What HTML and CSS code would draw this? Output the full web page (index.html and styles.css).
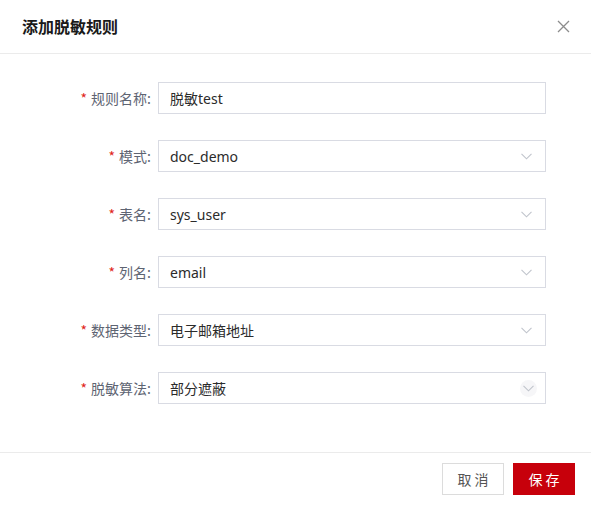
FILE: index.html
```html
<!DOCTYPE html>
<html lang="zh">
<head>
<meta charset="utf-8">
<link rel="stylesheet" href="styles.css">
</head>
<body>
<div class="dialog">
  <div class="header">
    <div class="title">添加脱敏规则</div>
    <svg class="close" width="13" height="13" viewBox="0 0 13 13"><path d="M1 1L12 12M12 1L1 12" stroke="#8c8c8c" stroke-width="1.3" fill="none"/></svg>
  </div>
  <div class="form">
    <label class="label"><span class="req">*</span>规则名称:</label>
    <div class="input">脱敏test</div>

    <label class="label"><span class="req">*</span>模式:</label>
    <div class="input select">doc_demo<svg class="chev" width="11" height="7" viewBox="0 0 11 7"><path d="M0.5 0.8L5.5 5.8L10.5 0.8" stroke="#c0c4cc" stroke-width="1.1" fill="none"/></svg></div>

    <label class="label"><span class="req">*</span>表名:</label>
    <div class="input select">sys_user<svg class="chev" width="11" height="7" viewBox="0 0 11 7"><path d="M0.5 0.8L5.5 5.8L10.5 0.8" stroke="#c0c4cc" stroke-width="1.1" fill="none"/></svg></div>

    <label class="label"><span class="req">*</span>列名:</label>
    <div class="input select">email<svg class="chev" width="11" height="7" viewBox="0 0 11 7"><path d="M0.5 0.8L5.5 5.8L10.5 0.8" stroke="#c0c4cc" stroke-width="1.1" fill="none"/></svg></div>

    <label class="label"><span class="req">*</span>数据类型:</label>
    <div class="input select">电子邮箱地址<svg class="chev" width="11" height="7" viewBox="0 0 11 7"><path d="M0.5 0.8L5.5 5.8L10.5 0.8" stroke="#c0c4cc" stroke-width="1.1" fill="none"/></svg></div>

    <label class="label"><span class="req">*</span>脱敏算法:</label>
    <div class="input select">部分遮蔽<span class="chev-bg"><svg class="chev" width="11" height="7" viewBox="0 0 11 7"><path d="M0.5 0.8L5.5 5.8L10.5 0.8" stroke="#c0c4cc" stroke-width="1.1" fill="none"/></svg></span></div>
  </div>
  <div class="footer">
    <button class="btn cancel">取 消</button>
    <button class="btn save">保 存</button>
  </div>
</div>
</body>
</html>
```
FILE: styles.css
```css
* { box-sizing: border-box; }
html, body { margin: 0; padding: 0; background: #fff; }
body {
  font-family: "Noto Sans", "Noto Sans CJK SC", sans-serif;
  font-size: 14px;
  color: #333;
}
.dialog { width: 591px; height: 505px; background: #fff; }
.header {
  height: 54px;
  border-bottom: 1px solid #ebebeb;
  display: flex;
  align-items: center;
  justify-content: space-between;
  padding: 0 21px 2px 22px;
}
.title {
  font-family: "Noto Sans CJK SC", sans-serif;
  font-size: 16px;
  font-weight: 700;
  color: #1a1a1a;
}
.close { display: block; margin-top: 2px; }
.form {
  display: grid;
  grid-template-columns: 151px 388px;
  column-gap: 7px;
  row-gap: 26px;
  padding: 28px 0 0 0;
  height: 398px;
  align-content: start;
}
.label {
  font-family: "Noto Sans CJK SC", sans-serif;
  text-align: right;
  color: #5e6472;
  font-size: 14px;
  line-height: 32px;
  height: 32px;
}
.req { color: #e0251b; margin-right: 4px; }
.input {
  height: 32px;
  border: 1px solid #d9dbe3;
  padding: 0 11px;
  display: flex;
  align-items: center;
  justify-content: space-between;
  font-size: 14px;
  color: #2b2b2b;
}
.chev { display: block; margin-right: 2px; }
.chev-bg {
  width: 17px; height: 17px; border-radius: 50%;
  background: #f6f6f8;
  display: flex; align-items: center; justify-content: center;
  margin-right: -3px;
}
.chev-bg .chev { margin: 1px 0 0 0; }
.footer {
  border-top: 1px solid #ebebeb;
  display: flex;
  justify-content: flex-end;
  gap: 9px;
  padding: 10px 16px 0 0;
}
.btn {
  width: 62px;
  height: 32px;
  font-family: "Noto Sans CJK SC", sans-serif;
  font-size: 14px;
  border-radius: 0;
  cursor: pointer;
}
.cancel { background: #fff; border: 1px solid #dcdcdc; color: #555; }
.save { background: #c7000b; border: 1px solid #c7000b; color: #fff; }
```
